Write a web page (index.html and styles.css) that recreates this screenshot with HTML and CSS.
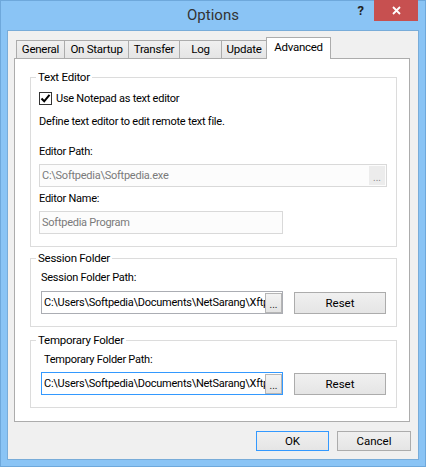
FILE: index.html
```html
<!DOCTYPE html>
<html lang="en">
<head>
  <meta charset="UTF-8" />
  <title>Options</title>
  <link rel="stylesheet" href="styles.css">
</head>
<body>
  <div class="window">
    <!-- Title bar -->
    <div class="titlebar">
      <span></span>
      <div class="title">Options</div>
      <div class="controls">
        <span class="help">?</span>
        <span class="close">
          <svg width="9" height="9" viewBox="0 0 9 9"><path d="M1 1 L8 8 M8 1 L1 8" stroke="#fff" stroke-width="1.8" fill="none"/></svg>
        </span>
      </div>
    </div>

    <div class="client">
      <div class="tabs">
        <div class="tab tab-general">General</div>
        <div class="tab tab-startup">On Startup</div>
        <div class="tab tab-transfer">Transfer</div>
        <div class="tab tab-log">Log</div>
        <div class="tab tab-update">Update</div>
        <div class="tab tab-advanced active">Advanced</div>
      </div>

      <div class="panel">
        <!-- Text Editor -->
        <fieldset class="group group-editor">
          <legend>Text Editor</legend>
          <div class="check-row">
            <span class="checkbox">
              <svg width="11" height="11" viewBox="0 0 11 11"><path d="M1.5 5.5 L4.2 8.3 L9.5 1.8" stroke="#000" stroke-width="2" fill="none"/></svg>
            </span>
            <span>Use Notepad as text editor</span>
          </div>
          <p class="hint">Define text editor to edit remote text file.</p>
          <p class="label label-path">Editor Path:</p>
          <div class="field field-disabled field-wide">
            <span class="field-text">C:\Softpedia\Softpedia.exe</span>
            <span class="browse browse-disabled">...</span>
          </div>
          <p class="label label-name">Editor Name:</p>
          <div class="field field-disabled field-name">
            <span class="field-text">Softpedia Program</span>
          </div>
        </fieldset>

        <!-- Session Folder -->
        <fieldset class="group group-session">
          <legend>Session Folder</legend>
          <p class="label label-session">Session Folder Path:</p>
          <div class="path-row">
            <div class="field field-path">
              <span class="field-text">C:\Users\Softpedia\Documents\NetSarang\Xftp</span>
              <span class="browse">...</span>
            </div>
            <button class="btn btn-reset">Reset</button>
          </div>
        </fieldset>

        <!-- Temporary Folder -->
        <fieldset class="group group-temp">
          <legend>Temporary Folder</legend>
          <p class="label label-temp">Temporary Folder Path:</p>
          <div class="path-row">
            <div class="field field-path field-focus">
              <span class="field-text">C:\Users\Softpedia\Documents\NetSarang\Xftp</span>
              <span class="browse">...</span>
            </div>
            <button class="btn btn-reset">Reset</button>
          </div>
        </fieldset>
      </div>

      <div class="footer">
        <button class="btn btn-ok">OK</button>
        <button class="btn btn-cancel">Cancel</button>
      </div>
    </div>
  </div>
</body>
</html>
```

FILE: styles.css
```css
:root {
  --frame: #8ac4f5;
  --client: #f0f0f0;
  --panel-border: #acacac;
  --group-border: #dcdcdc;
  --text: #000;
  --muted: #7a7a7a;
  --focus: #3399ff;
}

body {
  margin: 0;
  padding: 0;
  font-family: Roboto, 'Liberation Sans', sans-serif;
  font-size: 11px;
  letter-spacing: -0.25px;
  color: var(--text);
  background: var(--frame);
}

.window {
  width: 426px;
  height: 467px;
  box-sizing: border-box;
  background: var(--frame);
  box-shadow: inset 0 0 0 1px #6ea8db;
  padding: 0 7px;
}

/* Title bar */
.titlebar {
  height: 30px;
  display: grid;
  grid-template-columns: 1fr auto 1fr;
}

.title {
  font-size: 15px;
  letter-spacing: 0;
  line-height: 30px;
  color: #333;
}

.controls {
  justify-self: end;
  display: flex;
  margin-right: 1px;
}

.help {
  width: 27px;
  height: 21px;
  text-align: center;
  font-weight: bold;
  font-size: 13px;
  line-height: 22px;
  color: #222;
}

.close {
  width: 44px;
  height: 21px;
  background: #c75050;
  display: flex;
  align-items: center;
  justify-content: center;
}

/* Client area */
.client {
  height: 430px;
  box-sizing: border-box;
  border: 1px solid #78acd9;
  background: var(--client);
  padding: 6px 0 0 6px;
}

.tabs {
  display: flex;
  align-items: flex-end;
  padding-left: 2px;
  height: 21px;
}

.tab {
  height: 18px;
  box-sizing: border-box;
  border: 1px solid var(--panel-border);
  border-bottom: none;
  margin-left: -1px;
  background: linear-gradient(#f0f0f0, #e5e5e5);
  text-align: center;
  line-height: 17px;
  font-size: 11.5px;
}

.tab-general { width: 49px; margin-left: 0; }
.tab-startup { width: 65px; }
.tab-transfer { width: 52px; }
.tab-log { width: 43px; }
.tab-update { width: 46px; }

.tab.active {
  width: 65px;
  height: 22px;
  margin-bottom: -1px;
  background: #fff;
  position: relative;
  z-index: 1;
  line-height: 19px;
}

.panel {
  width: 396px;
  height: 364px;
  box-sizing: border-box;
  border: 1px solid var(--panel-border);
  background: #fff;
  padding: 11px 0 0 15px;
}

/* Group boxes */
.group {
  width: 367px;
  box-sizing: border-box;
  margin: 0;
  border: 1px solid var(--group-border);
  padding: 0 0 12px 8px;
  min-inline-size: 0;
}

.group legend {
  margin-left: -3px;
  padding: 0 2px;
  line-height: 14px;
  font-size: 11.5px;
}

.group-session,
.group-temp {
  padding-left: 10px;
}

.group-session legend,
.group-temp legend {
  margin-left: -5px;
}

.group-session { margin-top: 4px; }
.group-temp { margin-top: 6px; }

p {
  margin: 0;
  line-height: 14px;
}

.check-row {
  display: flex;
  align-items: center;
  height: 13px;
  margin-top: 8px;
}

.checkbox {
  width: 13px;
  height: 13px;
  box-sizing: border-box;
  border: 1px solid #333;
  background: #fff;
  margin-right: 4px;
  display: flex;
  align-items: center;
  justify-content: center;
}

.hint { margin-top: 10px; }
.label-path { margin-top: 16px; }
.label-name { margin-top: 5px; }
.label-session { margin-top: 6px; }
.label-temp { margin-top: 6px; padding-left: 3px; }

/* Text fields */
.field {
  height: 23px;
  box-sizing: border-box;
  border: 1px solid #abadb3;
  background: #fff;
  display: flex;
  align-items: center;
}

.field-text {
  flex: 1;
  overflow: hidden;
  white-space: nowrap;
  padding-left: 2px;
  line-height: 14px;
}

.field-disabled {
  border-color: #d9d9d9;
  background: #fcfcfc;
  color: var(--muted);
  margin-top: 5px;
}

.field-wide { width: 348px; }
.field-name { width: 244px; }
.field-path { width: 242px; }
.field-focus { border-color: var(--focus); }

.browse {
  width: 17px;
  height: 20px;
  box-sizing: border-box;
  border: 1px solid #b5b5b5;
  background: linear-gradient(#f3f3f3, #e3e3e3);
  font-size: 10px;
  letter-spacing: 0;
  line-height: 22px;
  text-align: center;
  color: #222;
}

.browse-disabled {
  width: 16px;
  height: 19px;
  margin-right: 1px;
  border-color: #ececec;
  background: #ececec;
  color: #8a8a8a;
}

.path-row {
  display: flex;
  align-items: center;
  gap: 11px;
  margin-top: 6px;
}

.group-temp .path-row { margin-top: 5px; }

/* Buttons */
.btn {
  font-family: inherit;
  font-size: 11.5px;
  color: #000;
  box-sizing: border-box;
  border: 1px solid var(--panel-border);
  background: linear-gradient(#f0f0f0, #e5e5e5);
  padding: 0;
  margin: 0;
}

.btn-reset {
  width: 92px;
  height: 22px;
}

.footer {
  display: flex;
  justify-content: flex-end;
  gap: 8px;
  margin-top: 9px;
  padding-right: 7px;
}

.btn-ok {
  width: 73px;
  height: 20px;
  border-color: var(--focus);
}

.btn-cancel {
  width: 74px;
  height: 20px;
}
```
